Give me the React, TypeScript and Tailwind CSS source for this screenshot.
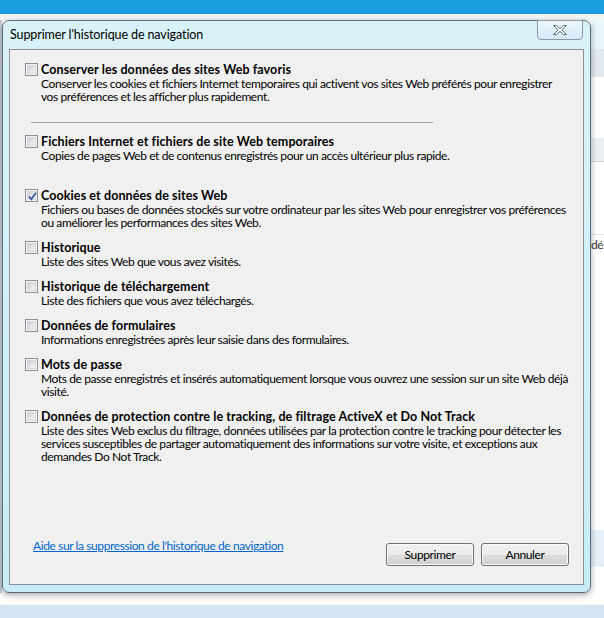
import React from 'react';

type ItemProps = {
  label: string;
  lines: string[];
  checked?: boolean;
  className?: string;
};

function Checkbox({ checked }: { checked?: boolean }) {
  return (
    <div className="w-[13px] h-[13px] border border-[#8e8f8f] bg-[#f4f4f4] p-[1px]">
      <div className="relative w-full h-full bg-linear-to-br from-[#cbcfd5] to-[#f7f7f7] border border-[#d6d8db]">
        {checked && (
          <svg className="absolute -left-[2px] -top-[2px]" width="13" height="13" viewBox="0 0 13 13">
            <path d="M3 6.5 L5.3 9.2 L10 2.8" fill="none" stroke="#3c5a9a" strokeWidth="1.8" />
          </svg>
        )}
      </div>
    </div>
  );
}

function Item({ label, lines, checked, className = '' }: ItemProps) {
  return (
    <div className={`flex items-start ${className}`}>
      <div className="w-[16px] pt-[1px] shrink-0">
        <Checkbox checked={checked} />
      </div>
      <div className="whitespace-nowrap">
        <div className="font-bold text-[12.5px] tracking-[0.1px] leading-[15px]">{label}</div>
        <p className="leading-[13px]">
          {lines.map((l, i) => (
            <React.Fragment key={i}>
              {i > 0 && <br />}
              {l}
            </React.Fragment>
          ))}
        </p>
      </div>
    </div>
  );
}

function Button({ children }: { children: React.ReactNode }) {
  return (
    <div className="w-[88px] h-[23px] rounded-[3px] border border-[#707070] bg-[linear-gradient(to_bottom,#f2f2f2_0%,#ebebeb_50%,#dddddd_51%,#cfcfcf_100%)] shadow-[inset_0_0_0_1px_#fbfbfb] flex items-center justify-center leading-[15px]">
      {children}
    </div>
  );
}

export default function App() {
  return (
    <div className="w-[604px] h-[618px] overflow-hidden bg-white flex flex-col text-[12px] text-black font-['Segoe_UI','Lato',sans-serif] tracking-[-0.4px]">
      <div className="h-[14px] bg-[#1b9de0]" />
      <div className="h-[6px] bg-[#f3f5f7]" />

      <div className="h-[573px] flex">
        <div className="w-[2px] bg-[#c9d1d8]" />

        {/* dialog */}
        <div className="relative w-[589px] h-[573px] rounded-[7px] border border-[#5b6c7c] bg-linear-to-b from-[#d9f2fa] to-[#c8edf8] px-[6px] pb-[7px] flex flex-col shadow-[0_2px_6px_rgba(0,0,0,0.35)]">
          <div className="h-[28px] pt-[6px] pl-[1px] text-[12.5px] tracking-[-0.1px] leading-[15px] shrink-0">
            Supprimer l'historique de navigation
          </div>

          <div className="absolute -top-[1px] right-[7px] w-[46px] h-[20px] rounded-b-[4px] border border-[#8b9bab] bg-linear-to-b from-[#eef8fc] to-[#d3e9f3] flex items-center justify-center">
            <svg width="16" height="12" viewBox="0 0 16 12">
              <path
                d="M1.5 1.5 H4.5 L8 4.6 L11.5 1.5 H14.5 L9.8 6 L14.5 10.5 H11.5 L8 7.4 L4.5 10.5 H1.5 L6.2 6 Z"
                fill="#ffffff"
                stroke="#5f6b78"
                strokeWidth="1"
              />
            </svg>
          </div>

          {/* client area */}
          <div className="flex-1 border border-[#8c9197] bg-[#f0f0f0] flex flex-col pt-[12px] pl-[15px] pr-[14px] pb-[18px]">
            <Item
              label="Conserver les données des sites Web favoris"
              lines={[
                'Conserver les cookies et fichiers Internet temporaires qui activent vos sites Web préférés pour enregistrer',
                'vos préférences et les afficher plus rapidement.',
              ]}
            />
            <div className="ml-[6px] mt-[19px] w-[402px] h-px bg-[#a0a0a0]" />
            <Item
              className="mt-[11px]"
              label="Fichiers Internet et fichiers de site Web temporaires"
              lines={['Copies de pages Web et de contenus enregistrés pour un accès ultérieur plus rapide.']}
            />
            <Item
              className="mt-[26px]"
              checked
              label="Cookies et données de sites Web"
              lines={[
                'Fichiers ou bases de données stockés sur votre ordinateur par les sites Web pour enregistrer vos préférences',
                'ou améliorer les performances des sites Web.',
              ]}
            />
            <Item className="mt-[11px]" label="Historique" lines={['Liste des sites Web que vous avez visités.']} />
            <Item
              className="mt-[11px]"
              label="Historique de téléchargement"
              lines={['Liste des fichiers que vous avez téléchargés.']}
            />
            <Item
              className="mt-[11px]"
              label="Données de formulaires"
              lines={['Informations enregistrées après leur saisie dans des formulaires.']}
            />
            <Item
              className="mt-[11px]"
              label="Mots de passe"
              lines={[
                'Mots de passe enregistrés et insérés automatiquement lorsque vous ouvrez une session sur un site Web déjà',
                'visité.',
              ]}
            />
            <Item
              className="mt-[11px]"
              label="Données de protection contre le tracking, de filtrage ActiveX et Do Not Track"
              lines={[
                'Liste des sites Web exclus du filtrage, données utilisées par la protection contre le tracking pour détecter les',
                'services susceptibles de partager automatiquement des informations sur votre visite, et exceptions aux',
                'demandes Do Not Track.',
              ]}
            />

            <div className="mt-auto flex items-start justify-between">
              <a href="#" className="ml-[8px] leading-[15px] text-[#0066cc] underline">
                Aide sur la suppression de l'historique de navigation
              </a>
              <div className="mt-[5px] flex gap-[7px]">
                <Button>Supprimer</Button>
                <Button>Annuler</Button>
              </div>
            </div>
          </div>
        </div>

        {/* page behind, right edge */}
        <div className="w-[13px] flex flex-col overflow-hidden">
          <div className="h-[29px] bg-[#e9f6fb]" />
          <div className="h-[28px] bg-[#e1e8ee]" />
          <div className="h-[61px] bg-white" />
          <div className="h-[24px] bg-[#eceff1] border-b border-[#d2d6da]" />
          <div className="h-[73px] bg-white border-b border-[#e2e5e8]" />
          <div className="h-[20px] leading-[20px] whitespace-nowrap text-[#333]">dé</div>
          <div className="h-[275px] bg-white" />
          <div className="h-[37px] bg-[#e6eff7]" />
          <div className="flex-1 bg-white" />
        </div>
      </div>

      <div className="h-[12px] bg-white" />
      <div className="h-[13px] bg-[#d5e4f2]" />
    </div>
  );
}
